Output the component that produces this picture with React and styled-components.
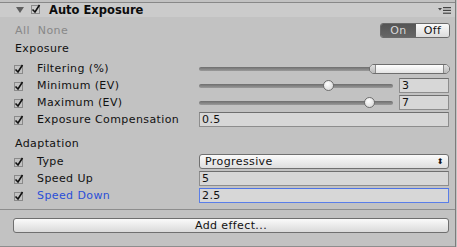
import styled, { createGlobalStyle } from "styled-components";

const Global = createGlobalStyle`
  html, body {
    margin: 0;
    background: #c2c2c2;
  }
  body {
    font-family: "DejaVu Sans", Verdana, sans-serif;
    font-size: 11px;
    letter-spacing: 0.4px;
    color: #111;
  }
`;

const Panel = styled.div`
  width: 456px;
  height: 247px;
  padding-top: 2px;
  border-right: 1px solid #7c7c7c;
  box-sizing: border-box;
  display: flex;
  flex-direction: column;
`;

const Header = styled.div`
  height: 17px;
  border-top: 1px solid #888;
  background: #cbcbcb;
  display: flex;
  align-items: center;
  padding-left: 16px;
  padding-right: 4px;
  box-sizing: border-box;
`;

const Title = styled.span`
  font-weight: bold;
  font-size: 11.5px;
  margin-left: 8px;
  color: #0c0c0c;
  letter-spacing: 0;
`;

const Spacer = styled.div`
  flex: 1;
`;

const Body = styled.div`
  padding-left: 14px;
  padding-right: 6px;
  display: flex;
  flex-direction: column;
`;

const TopLine = styled.div`
  height: 16px;
  margin-top: 5px;
  display: flex;
  align-items: center;
`;

const Muted = styled.span`
  color: #888;
  margin-left: 1px;
  margin-right: 7px;
`;

const Toggle = styled.div`
  display: flex;
  height: 15px;
  border: 1px solid #6a6a6a;
  border-radius: 3px;
  overflow: hidden;
  box-sizing: border-box;
  margin-right: -1px;
`;

const ToggleSeg = styled.div`
  width: ${(p) => p.$w}px;
  display: flex;
  align-items: center;
  justify-content: center;
  font-size: 11px;
  background: ${(p) =>
    p.$on ? "linear-gradient(#555, #666)" : "linear-gradient(#fafafa, #dcdcdc)"};
  color: ${(p) => (p.$on ? "#d8d8d8" : "#111")};
`;

const Heading = styled.div`
  height: 17px;
  display: flex;
  align-items: center;
  padding-left: 1px;
  margin-top: ${(p) => p.$mt || 0}px;
`;

const Row = styled.div`
  height: 17px;
  display: flex;
  align-items: center;
`;

const Label = styled.span`
  width: 162px;
  margin-left: 13px;
  color: ${(p) => (p.$active ? "#2a4fd8" : "#111")};
`;

const Control = styled.div`
  flex: 1;
  display: flex;
  align-items: center;
  gap: 6px;
  height: 17px;
`;

const Track = styled.div`
  flex: 1;
  height: 4px;
  position: relative;
  background: linear-gradient(#6e6e6e, #9a9a9a);
  border-radius: 2px;
`;

const Thumb = styled.div`
  position: absolute;
  top: -4px;
  width: 11px;
  height: 11px;
  margin-left: -6px;
  border-radius: 50%;
  border: 1px solid #6e6e6e;
  background: radial-gradient(circle at 40% 35%, #ffffff, #d0d0d0);
  box-sizing: border-box;
`;

const Range = styled.div`
  position: absolute;
  top: -3px;
  height: 10px;
  border: 1px solid #6e6e6e;
  border-radius: 5px;
  background: linear-gradient(#ffffff, #e4e4e4);
  box-sizing: border-box;
  display: flex;
  justify-content: space-between;
`;

const RangeCap = styled.div`
  width: 5px;
  height: 100%;
  background: linear-gradient(#e0e0e0, #b8b8b8);
  border-radius: ${(p) => (p.$end ? "0 5px 5px 0" : "5px 0 0 5px")};
  border-${(p) => (p.$end ? "left" : "right")}: 1px solid #8a8a8a;
`;

const Field = styled.div`
  width: ${(p) => (p.$w ? `${p.$w}px` : "auto")};
  flex: ${(p) => (p.$w ? "none" : 1)};
  height: 15px;
  box-sizing: border-box;
  border: 1px solid ${(p) => (p.$focus ? "#5a7ee8" : "#8d8d8d")};
  border-top-color: ${(p) => (p.$focus ? "#4f74e6" : "#6f6f6f")};
  background: #d7d7d7;
  padding-left: 2px;
  display: flex;
  align-items: center;
  font-size: 11px;
  color: #111;
`;

const Select = styled.div`
  flex: 1;
  height: 15px;
  box-sizing: border-box;
  border: 1px solid #707070;
  border-radius: 3px;
  background: linear-gradient(#fbfbfb, #dedede);
  display: flex;
  align-items: center;
  justify-content: space-between;
  padding: 0 4px 0 5px;
  font-size: 11px;
`;

const Separator = styled.div`
  border-top: 1px solid #8d8d8d;
  margin-top: ${(p) => p.$mt}px;
`;

const ButtonRow = styled.div`
  padding: 8px 6px 0 13px;
  height: 24px;
`;

const Button = styled.div`
  height: 15px;
  border: 1px solid #6f6f6f;
  border-radius: 3px;
  background: linear-gradient(#fafafa, #dadada);
  display: flex;
  align-items: center;
  justify-content: center;
  font-size: 11px;
  box-sizing: border-box;
`;

function Check({ box = true }) {
  return (
    <svg width="10" height="10" viewBox="0 0 10 10">
      {box && (
        <rect x="0.5" y="1.5" width="8" height="8" fill="none" stroke="#8a8a8a" />
      )}
      <path d="M1.5 5.5 L4 8 L8.5 1" fill="none" stroke="#111" strokeWidth="1.6" />
    </svg>
  );
}

function Triangle() {
  return (
    <svg width="8" height="8" viewBox="0 0 8 8">
      <path d="M0 1 L8 1 L4 7 Z" fill="#5e5e5e" />
    </svg>
  );
}

function MenuIcon() {
  return (
    <svg width="13" height="7" viewBox="0 0 13 7">
      <path d="M0 1 L4 1 L2 3.5 Z" fill="#444" />
      <rect x="5" y="0" width="8" height="1.2" fill="#444" />
      <rect x="5" y="2.8" width="8" height="1.2" fill="#444" />
      <rect x="5" y="5.6" width="8" height="1.2" fill="#444" />
    </svg>
  );
}

function SliderRow({ label, pos, value }) {
  return (
    <Row>
      <Check />
      <Label>{label}</Label>
      <Control>
        <Track>
          <Thumb style={{ left: `${pos * 100}%` }} />
        </Track>
        <Field $w={50}>{value}</Field>
      </Control>
    </Row>
  );
}

function FieldRow({ label, value, active }) {
  return (
    <Row>
      <Check />
      <Label $active={active}>{label}</Label>
      <Control>
        <Field $focus={active}>{value}</Field>
      </Control>
    </Row>
  );
}

export default function App() {
  return (
    <>
      <Global />
      <Panel>
        <Header>
          <Triangle />
          <span style={{ marginLeft: 7 }}>
            <Check />
          </span>
          <Title>Auto Exposure</Title>
          <Spacer />
          <MenuIcon />
        </Header>
        <Body>
          <TopLine>
            <Muted>All</Muted>
            <Muted>None</Muted>
            <Spacer />
            <Toggle>
              <ToggleSeg $on $w={35}>On</ToggleSeg>
              <ToggleSeg $w={33}>Off</ToggleSeg>
            </Toggle>
          </TopLine>
          <Heading $mt={2}>Exposure</Heading>
          <Row style={{ marginTop: 3 }}>
            <Check />
            <Label>Filtering (%)</Label>
            <Control>
              <Track>
                <Range style={{ left: "68%", right: "-1px" }}>
                  <RangeCap />
                  <RangeCap $end />
                </Range>
              </Track>
            </Control>
          </Row>
          <SliderRow label="Minimum (EV)" pos={0.67} value="3" />
          <SliderRow label="Maximum (EV)" pos={0.88} value="7" />
          <FieldRow label="Exposure Compensation" value="0.5" />
          <Heading $mt={7}>Adaptation</Heading>
          <Row style={{ marginTop: 1 }}>
            <Check />
            <Label>Type</Label>
            <Control>
              <Select>
                <span>Progressive</span>
                <span style={{ fontSize: 8 }}>⬍</span>
              </Select>
            </Control>
          </Row>
          <FieldRow label="Speed Up" value="5" />
          <FieldRow label="Speed Down" value="2.5" active />
        </Body>
        <Separator $mt={5} />
        <ButtonRow>
          <Button>Add effect...</Button>
        </ButtonRow>
        <Separator $mt={8} />
      </Panel>
    </>
  );
}
